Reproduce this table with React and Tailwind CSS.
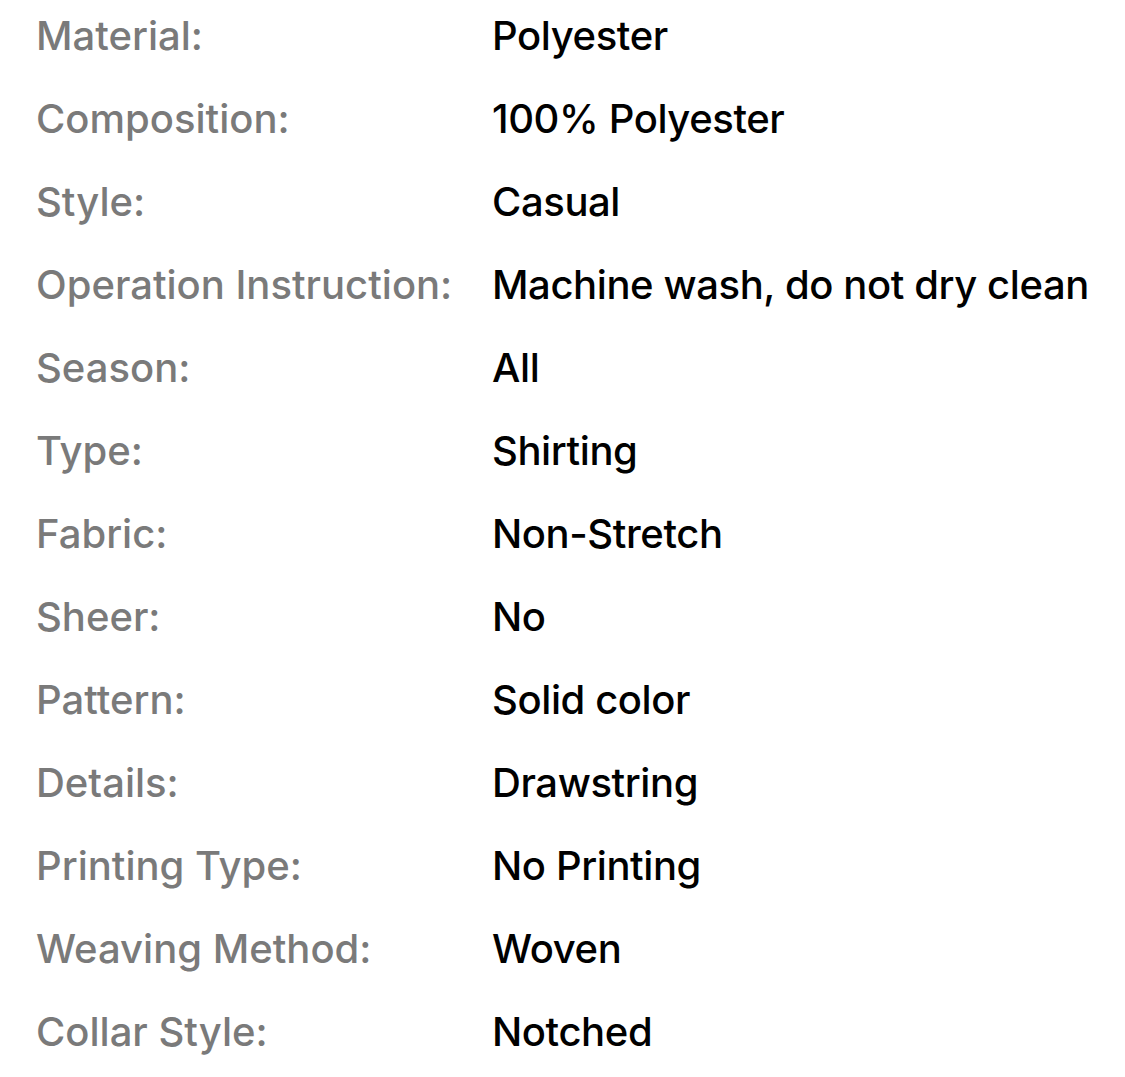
const rows = [
  ["Material:", "Polyester"],
  ["Composition:", "100% Polyester"],
  ["Style:", "Casual"],
  ["Operation Instruction:", "Machine wash, do not dry clean"],
  ["Season:", "All"],
  ["Type:", "Shirting"],
  ["Fabric:", "Non-Stretch"],
  ["Sheer:", "No"],
  ["Pattern:", "Solid color"],
  ["Details:", "Drawstring"],
  ["Printing Type:", "No Printing"],
  ["Weaving Method:", "Woven"],
  ["Collar Style:", "Notched"],
];

export default function App() {
  return (
    <div className="w-[1125px] h-[1077px] bg-white overflow-hidden" style={{ fontFamily: "Inter, 'Noto Sans', sans-serif" }}>
      <div className="-mt-[6px] pl-[36px]">
        {rows.map(([k, v]) => (
          <div key={k} className="flex h-[83px] leading-[83px] text-[40px] font-medium whitespace-nowrap">
            <div className="w-[456px] text-[#7a7a7a]">{k}</div>
            <div className="text-black tracking-[-0.4px]">{v}</div>
          </div>
        ))}
      </div>
    </div>
  );
}
